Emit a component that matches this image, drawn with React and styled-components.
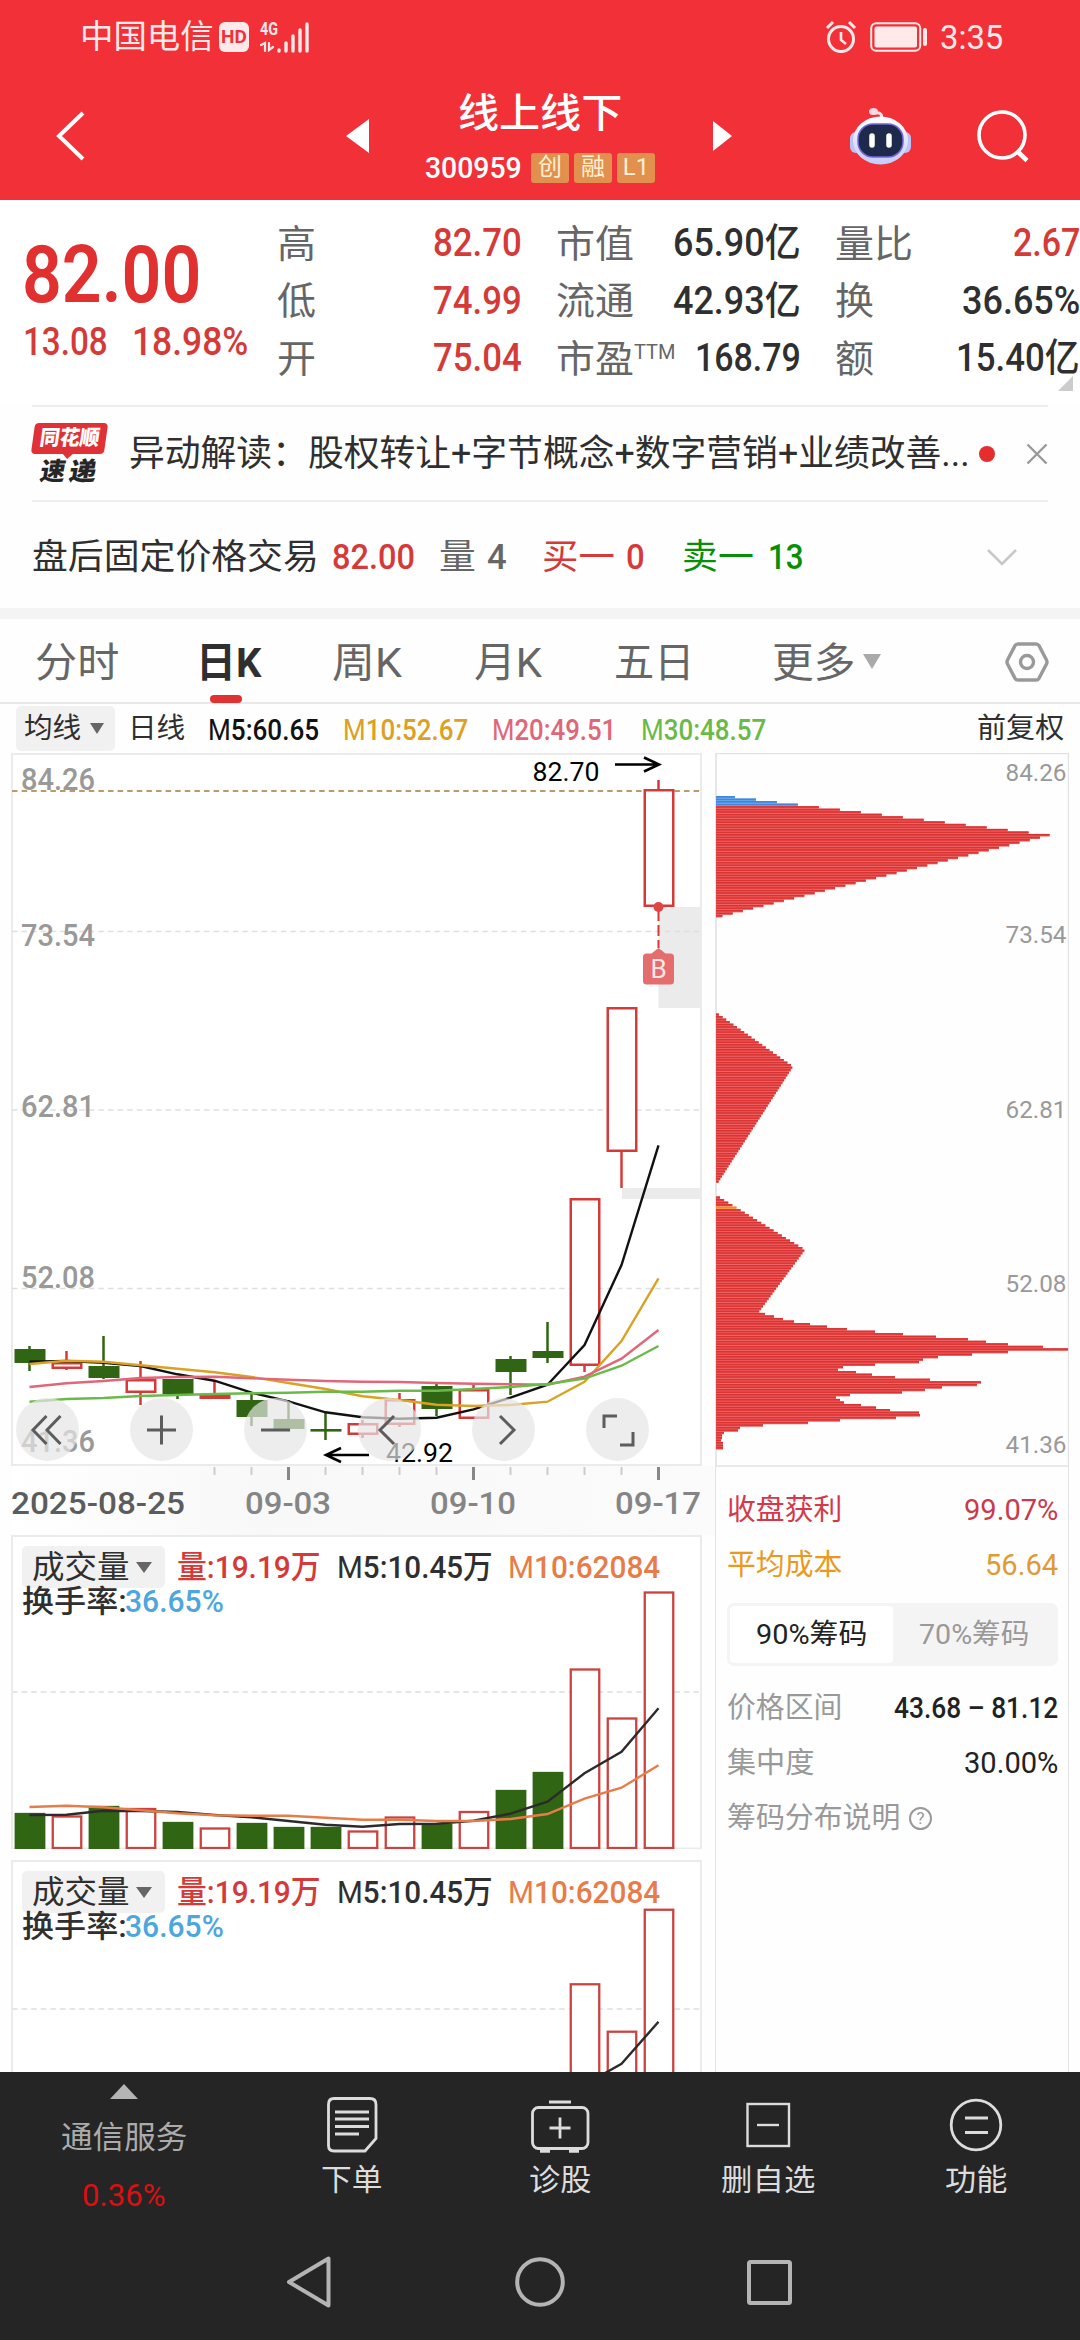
import React, { useLayoutEffect, useRef, useState } from 'react'
import styled, { createGlobalStyle } from 'styled-components'

const COLOR = {
    BRAND: '#f13038',
    UP: '#d43a38',
    DOWN: '#306513',
    TEXT: '#2f2f2f',
    SUBTEXT: '#666666',
    MUTED: '#999999',
    LINE: '#ebebeb',
    BLACK: '#111111',
    GOLD: '#dba125',
    PINK: '#e0667a',
    GREEN: '#6aba48',
    ORANGE: '#e87c48',
    BLUE: '#4da6de',
    NAV: '#252525',
}
const FONT = '"Roboto", "Noto Sans CJK SC", sans-serif'

// Text squeezed to a given width, like the narrow numerals of the app
const Fit = ({ w, children, ...rest }) => {
    const ref = useRef(null)
    const [scale, setScale] = useState(1)
    const bleed = (rest.$size || 30) * 0.08
    useLayoutEffect(() => {
        setScale((w + bleed) / ref.current.offsetWidth)
    }, [w, bleed])
    return (
        <FitBox $w={w} {...rest}>
            <FitInner ref={ref} $shift={-bleed / 2} style={{ transform: `scaleX(${scale})` }}>{children}</FitInner>
        </FitBox>
    )
}

const App = () => (
    <Screen>
        <GlobalStyle />
        <StatusBar />
        <TitleBar />
        <Quote />
        <News />
        <AfterHours />
        <Band />
        <Tabs />
        <AverageRow />
        <Charts>
            <ChartColumn>
                <KLine />
                <Volume top={1535} height={314} grid={1692} base={1849} ratio={1} />
                <Volume top={1860} height={330} grid={2009} base={2158} ratio={0.968} />
            </ChartColumn>
            <ChipColumn>
                <ChipChart />
                <ChipStats />
            </ChipColumn>
        </Charts>
        <BottomBar />
        <SystemNav />
    </Screen>
)

const StatusBar = () => (
    <Status>
        <Fit w={131} $size={33} $ml={81}>中国电信</Fit>
        <HdBadge>HD</HdBadge>
        <svg width="52" height="48" viewBox="259 12 52 48" fill="none" stroke="#ffe9e9" strokeWidth="3.4" strokeLinecap="round">
            <text x="260" y="34" fontSize="18" fontWeight="700" fill="#ffe9e9" stroke="none" fontFamily="Roboto" textLength="18" lengthAdjust="spacingAndGlyphs">4G</text>
            <path d="M261 44l4-2v8M269 42v7l4-3" strokeWidth="2.2" />
            <path d="M279 49v1M286 42v8M293 35v15M300 29v21M307 23v27" />
        </svg>
        <StatusRight>
            <svg width="32" height="34" viewBox="0 0 32 34" fill="none" stroke="#ffe9e9" strokeWidth="3">
                <circle cx="16" cy="19" r="12.5" />
                <path d="M2 8l6-6M30 8l-6-6" />
                <path d="M16 12v8l5 4" strokeWidth="2.6" />
            </svg>
            <svg width="58" height="30" viewBox="0 0 58 30">
                <rect x="1.2" y="1.2" width="49" height="27.6" rx="5" fill="none" stroke="#ffe9e9" strokeWidth="2" />
                <rect x="4.5" y="4.5" width="42.500" height="21" rx="2" fill="#ffe9e9" />
                <path d="M55 8v14" stroke="#ffe9e9" strokeWidth="4" strokeLinecap="round" />
            </svg>
            <Fit w={61} $size={34}>3:35</Fit>
        </StatusRight>
    </Status>
)

const TitleBar = () => (
    <Title>
        <Icon $ml={55} width="31" height="52" viewBox="0 0 31 52">
            <path d="M28 3L4 26l24 23" fill="none" stroke="#fff" strokeWidth="4" />
        </Icon>
        <Icon $ml={260} width="23" height="34" viewBox="0 0 23 34"><path d="M23 0v34L0 17z" fill="#fff" /></Icon>
        <TitleText>
            <Fit w={161} $size={40} $weight={500}>线上线下</Fit>
            <CodeRow>
                <Fit w={94} $size={30} $weight={500}>300959</Fit>
                <Tags>
                    <Tag>创</Tag>
                    <Tag>融</Tag>
                    <Tag>L1</Tag>
                </Tags>
            </CodeRow>
        </TitleText>
        <Icon $ml={58} width="19" height="30" viewBox="0 0 19 30"><path d="M0 0v30l19-15z" fill="#fff" /></Icon>
        <Icon $ml={118} width="62" height="58" viewBox="850 105 62 58">
            <defs>
                <linearGradient id="shell" x1="0" y1="0" x2="0" y2="1">
                    <stop offset="0" stopColor="#ffffff" />
                    <stop offset="1" stopColor="#c3cbfa" />
                </linearGradient>
            </defs>
            <path d="M880 118c4-5 0-8-5-7" fill="none" stroke="#ffe3e6" strokeWidth="3" />
            <ellipse cx="873.500" cy="109.500" rx="4.500" ry="3.500" fill="#fbd9de" />
            <rect x="850" y="130" width="12" height="21" rx="6" fill="#b9c3f5" />
            <rect x="899" y="130" width="12" height="21" rx="6" fill="#b9c3f5" />
            <ellipse cx="880.500" cy="138.500" rx="27.500" ry="24" fill="url(#shell)" />
            <rect x="858" y="122" width="45" height="33" rx="15" fill="#1d2a4b" stroke="#7566d8" strokeWidth="1.500" />
            <path d="M872 134v9M889 134v9" stroke="#fff" strokeWidth="5.500" strokeLinecap="round" />
        </Icon>
        <Icon $ml={64} width="54" height="54" viewBox="0 0 54 54" fill="none" stroke="#fff" strokeWidth="3.600">
            <circle cx="26" cy="26" r="23" />
            <path d="M42 43l9 8.500" strokeWidth="4.500" />
        </Icon>
    </Title>
)

const quotes = [
    [{ label: '高', value: '82.70', w: 86, up: true }, { label: '低', value: '74.99', w: 86, up: true }, { label: '开', value: '75.04', w: 86, up: true }],
    [{ label: '市值', value: '65.90亿', w: 125 }, { label: '流通', value: '42.93亿', w: 125 }, { label: '市盈', sup: 'TTM', value: '168.79', w: 103 }],
    [{ label: '量比', value: '2.67', w: 64, up: true }, { label: '换', value: '36.65%', w: 115 }, { label: '额', value: '15.40亿', w: 121 }],
]

const Quote = () => (
    <QuoteBox>
        <PriceBlock>
            <Fit w={173} $size={79} $weight={600} $color="#e03030">82.00</Fit>
            <ChangeRow>
                <Fit w={82} $size={39} $weight={500} $color={COLOR.UP}>13.08</Fit>
                <Fit w={113} $size={39} $weight={500} $color={COLOR.UP}>18.98%</Fit>
            </ChangeRow>
        </PriceBlock>
        {quotes.map((column, i) => (
            <QuoteColumn key={i}>
                {column.map((q) => (
                    <QuoteCell key={q.label}>
                        <QuoteLabel>
                            <Fit w={q.label.length === 1 ? 36 : 75} $size={38} $color={COLOR.SUBTEXT}>{q.label}</Fit>
                            {q.sup && <Sup>{q.sup}</Sup>}
                        </QuoteLabel>
                        <Fit w={q.w} $size={39} $weight={500} $color={q.up ? COLOR.UP : COLOR.TEXT}>{q.value}</Fit>
                    </QuoteCell>
                ))}
            </QuoteColumn>
        ))}
        <Corner />
    </QuoteBox>
)

const News = () => (
    <NewsRow>
        <NewsLogo>
            <LogoTop><Fit w={58} $size={21} $weight={900} $color="#fff">同花顺</Fit></LogoTop>
            <LogoBottom>
                <Fit w={23} $size={25} $weight={900} $color="#262626">速</Fit>
                <Fit w={25} $size={25} $weight={900} $color="#262626">递</Fit>
            </LogoBottom>
        </NewsLogo>
        <Fit w={838} $size={36} $ml={24} $color={COLOR.TEXT}>异动解读：股权转让+字节概念+数字营销+业绩改善...</Fit>
        <Dot />
        <Icon $ml={31} width="22" height="22" viewBox="0 0 22 22"><path d="M1.500 1.500l19 19M20.500 1.500l-19 19" stroke="#999" strokeWidth="2.400" /></Icon>
    </NewsRow>
)

const AfterHours = () => (
    <AfterRow>
        <Fit w={284} $size={35} $color={COLOR.TEXT}>盘后固定价格交易</Fit>
        <Fit w={80} $size={35} $ml={16} $weight={500} $color={COLOR.UP}>82.00</Fit>
        <Fit w={34} $size={35} $ml={27} $color={COLOR.SUBTEXT}>量</Fit>
        <Fit w={17} $size={35} $ml={14} $weight={500} $color={COLOR.SUBTEXT}>4</Fit>
        <Fit w={70} $size={35} $ml={38} $color={COLOR.UP}>买一</Fit>
        <Fit w={16} $size={35} $ml={14} $weight={500} $color={COLOR.UP}>0</Fit>
        <Fit w={69} $size={35} $ml={40} $color="#078f07">卖一</Fit>
        <Fit w={33} $size={35} $ml={17} $weight={500} $color="#078f07">13</Fit>
        <Icon $ml={184} width="32" height="19" viewBox="0 0 32 19"><path d="M2 2l14 14L30 2" fill="none" stroke="#c8c8c8" strokeWidth="2.600" /></Icon>
    </AfterRow>
)

const tabs = [
    { name: '分时', w: 81, ml: 37 },
    { name: '日K', w: 62, ml: 80, active: true },
    { name: '周K', w: 67, ml: 74 },
    { name: '月K', w: 65, ml: 75 },
    { name: '五日', w: 77, ml: 75 },
    { name: '更多', w: 80, ml: 81 },
]

const Tabs = () => (
    <TabRow>
        {tabs.map((tab) => (
            <Tab key={tab.name} $ml={tab.ml} $active={tab.active}>
                <Fit w={tab.w} $size={41} $weight={tab.active ? 700 : 400} $color={tab.active ? COLOR.TEXT : COLOR.SUBTEXT}>{tab.name}</Fit>
            </Tab>
        ))}
        <Caret $ml={9} $half={9.5} $h={15} $color="#aaa" />
        <Icon $ml={124} width="44" height="40" viewBox="0 0 44 40" fill="none" stroke="#999" strokeWidth="3.400">
            <path d="M13 2h18q2 0 3 1.700l7.500 14.300q1 2 0 4L34 36.300q-1 1.700-3 1.700H13q-2 0-3-1.700L2.500 22q-1-2 0-4L10 3.700Q11 2 13 2z" />
            <circle cx="22" cy="20" r="6.500" />
        </Icon>
    </TabRow>
)

const AverageRow = () => (
    <Averages>
        <Picker $w={99} $h={45}>
            <Fit w={55} $size={28} $ml={9} $color={COLOR.TEXT}>均线</Fit>
            <Caret $ml={10} $half={7} $h={11} $color="#666" />
        </Picker>
        <Fit w={55} $size={28} $ml={14} $color={COLOR.TEXT}>日线</Fit>
        <Fit w={109} $size={30} $ml={25} $weight={500} $color={COLOR.BLACK}><Thin>M</Thin>5:60.65</Fit>
        <Fit w={123} $size={30} $ml={26} $weight={500} $color={COLOR.GOLD}><Thin>M</Thin>10:52.67</Fit>
        <Fit w={122} $size={30} $ml={26} $weight={500} $color={COLOR.PINK}><Thin>M</Thin>20:49.51</Fit>
        <Fit w={123} $size={30} $ml={27} $weight={500} $color={COLOR.GREEN}><Thin>M</Thin>30:48.57</Fit>
        <Fit w={85} $size={28} $ml={213} $color={COLOR.TEXT}>前复权</Fit>
    </Averages>
)

// high, bodyTop, bodyBottom, low, rising
const candles = [
    [1346, 1349, 1363, 1371, 0], [1351, 1362, 1369, 1370, 1], [1336, 1366, 1378, 1379, 0],
    [1361, 1379, 1393, 1405, 1], [1379, 1379, 1394, 1399, 0], [1380, 1394, 1399, 1399, 1],
    [1394, 1400, 1417, 1426, 0], [1400, 1419, 1429, 1429, 0], [1413, 1429, 1431, 1440, 0],
    [1420, 1423, 1435, 1438, 1], [1393, 1399, 1425, 1427, 1], [1384, 1386, 1409, 1416, 0],
    [1384, 1389, 1419, 1419, 1], [1356, 1359, 1372, 1395, 0], [1322, 1351, 1358, 1363, 0],
    [1198, 1198, 1366, 1372, 1], [1007, 1007, 1152, 1188, 1], [780, 789, 907, 907, 1],
]
const averages = [
    [COLOR.BLACK, [1361.7, 1361, 1362.7, 1366, 1374.3, 1380.7, 1392.7, 1401.3, 1412.3, 1417.3, 1418.7, 1417.7, 1409.3, 1397.7, 1384.7, 1345, 1265, 1145.3]],
    [COLOR.GOLD, [1364, 1360.7, 1361.7, 1365.3, 1368.7, 1372.3, 1377, 1383, 1389, 1396.3, 1400, 1404.7, 1406, 1405, 1401.7, 1381.7, 1341, 1278.3]],
    [COLOR.PINK, [1387, 1383.3, 1381, 1378, 1377, 1376.7, 1378.3, 1379.7, 1381, 1381.7, 1382, 1383, 1383.7, 1384.3, 1384.7, 1376.7, 1358.7, 1330]],
    [COLOR.GREEN, [1401.7, 1399, 1398, 1396, 1395, 1394, 1393.3, 1392.7, 1391.7, 1391.7, 1390.7, 1390.7, 1389, 1387, 1384, 1378.7, 1365.7, 1346]],
]
const cx = (i) => 29.5 + i * 37
const points = (ys) => ys.map((y, i) => `${cx(i)},${y}`).join(' ')

const Label = ({ w, children, ...rest }) => (
    <text textLength={w} lengthAdjust="spacingAndGlyphs" fontFamily="Roboto" {...rest}>{children}</text>
)

const KLine = () => (
    <KBox>
        <svg width="716" height="782" viewBox="0 753 716 782">
            <defs>
                <linearGradient id="fade">
                    <stop offset="0" stopColor="#fff" />
                    <stop offset="0.350" stopColor="#f8f8f8" />
                    <stop offset="1" stopColor="#fbfbfb" />
                </linearGradient>
            </defs>
            <rect x="12" y="1466" width="704" height="69" fill="url(#fade)" />
            <rect x="12" y="754" width="689" height="711" fill="#fff" stroke={COLOR.LINE} strokeWidth="2" />
            <rect x="658.500" y="907" width="43.500" height="101" fill="#ebebeb" />
            <rect x="622" y="1188" width="80" height="11" fill="#ebebeb" />
            {[931.5, 1110, 1288.5].map((y) => (
                <path key={y} d={`M12 ${y}H701`} stroke="#dfdfdf" strokeWidth="1.300" strokeDasharray="5.500 4.100" />
            ))}
            {[['84.26', 790], ['73.54', 946], ['62.81', 1117], ['52.08', 1288], ['41.36', 1452]].map(([t, y]) => (
                <Label key={t} w={74} x="21" y={y} fontSize="32" fontWeight="500" fill={COLOR.MUTED}>{t}</Label>
            ))}
            <path d="M12 791H701" stroke="#b99a6b" strokeWidth="2" strokeDasharray="5.500 4.100" />
            {candles.map(([high, top, bottom, low, rising], i) => (
                <g key={i} stroke={rising ? COLOR.UP : COLOR.DOWN} strokeWidth="2.500">
                    <path d={`M${cx(i)} ${high}V${top}M${cx(i)} ${bottom}V${low}`} />
                    <rect x={cx(i) - 13.75} y={top + 1.25} width="28.500" height={Math.max(bottom - top - 2.5, 0.1)} fill={rising ? '#fff' : COLOR.DOWN} />
                </g>
            ))}
            {averages.map(([color, ys]) => (
                <polyline key={color} points={points(ys)} fill="none" stroke={color} strokeWidth="2.400" />
            ))}
            <path d="M658.500 910v38" stroke={COLOR.UP} strokeWidth="2" strokeDasharray="11 4" />
            <circle cx="658.500" cy="907" r="5" fill="#e04545" />
            <path d="M658.500 948l7 5.500h5q3.500 0 3.500 3.500v24q0 3.500-3.500 3.500h-24q-3.500 0-3.500-3.500v-24q0-3.500 3.500-3.500h5z" fill="#e56d6d" />
            <text x="658.500" y="978" fontSize="26" fontFamily="Roboto" fill="#ffe6e6" textAnchor="middle">B</text>
            <Label w={67} x="532.500" y="780.500" fontSize="26" fill="#000">82.70</Label>
            <path d="M615 764.500h43M644 757.500l15 7-15 7" fill="none" stroke="#000" strokeWidth="2.600" />
            <Label w={67} x="386" y="1462" fontSize="26" fill="#000">42.92</Label>
            <path d="M369 1455h-43M341 1448l-15 7 15 7" fill="none" stroke="#000" strokeWidth="2.600" />
            {Array.from({ length: 13 }, (_, i) => i + 5).map((i) => (
                (i - 7) % 5 === 0
                    ? <path key={i} d={`M${cx(i)} 1467v13`} stroke="#888" strokeWidth="3" />
                    : <path key={i} d={`M${cx(i)} 1467v8`} stroke="#ccc" strokeWidth="2" />
            ))}
            <Label w={174} x="11" y="1514" fontSize="31" fontWeight="500" fill="#5c5c5c">2025-08-25</Label>
            <Label w={86} x="245" y="1514" fontSize="31" fontWeight="500" fill="#858585">09-03</Label>
            <Label w={86} x="430" y="1514" fontSize="31" fontWeight="500" fill="#858585">09-10</Label>
            <Label w={86} x="615" y="1514" fontSize="31" fontWeight="500" fill="#858585">09-17</Label>
        </svg>
        <Controls>
            {controls.map((d) => (
                <Control key={d}>
                    <svg width="63" height="63" viewBox="0 0 63 63" fill="none" stroke="#5c5c5c" strokeWidth="3"><path d={d} /></svg>
                </Control>
            ))}
        </Controls>
    </KBox>
)
const controls = [
    'M30.500 18L17 32l13.500 14M44.500 18L31 32l13.500 14',
    'M17 32h29M31.500 17.500v29',
    'M17 32h29',
    'M36 18L22 32l14 14',
    'M28 18l14 14-14 14',
    'M18 30V18h13M47 34v13H34',
]

// top of the bar, rising
const volumes = [
    [1813, 0], [1815.5, 1], [1806, 0], [1808, 1], [1822, 0], [1827.5, 1], [1823, 0], [1827, 0], [1827, 0],
    [1830.5, 1], [1816.5, 1], [1824, 0], [1811, 1], [1790, 0], [1772, 0], [1668.5, 1], [1717.5, 1], [1591.5, 1],
]
const volume5 = [1815, 1814.7, 1810.7, 1811, 1812, 1815, 1817.3, 1821, 1824.7, 1826.7, 1824, 1823.7, 1820.7, 1813.7, 1801.7, 1773.3, 1751.7, 1708.3]
const volume10 = [1807, 1805.7, 1807.3, 1810.3, 1813.3, 1815.3, 1815.7, 1815.7, 1817.7, 1819.7, 1819.7, 1821, 1821, 1819, 1814, 1798.7, 1787.7, 1765.3]

const Volume = ({ top, height, grid, base, ratio }) => {
    const y = (v) => base - (1849 - v) * ratio
    return (
        <VolumeBox $h={height}>
            <VolumeChart width="716" height={height} viewBox={`0 ${top} 716 ${height}`}>
                <rect x="12" y={top + 1} width="689" height={base - top - 1.5} fill="#fff" stroke={COLOR.LINE} strokeWidth="2" />
                <path d={`M12 ${grid}H701`} stroke="#e6e6e6" strokeWidth="1.800" strokeDasharray="5.500 4.100" />
                {volumes.map(([v, rising], i) => (
                    <rect
                        key={i}
                        x={cx(i) - 13.75}
                        y={y(v) + 1}
                        width="28.500"
                        height={base - y(v) - 2}
                        fill={rising ? '#fff' : COLOR.DOWN}
                        stroke={rising ? '#cb4340' : COLOR.DOWN}
                        strokeWidth="2.300"
                    />
                ))}
                <polyline points={points(volume5.map(y))} fill="none" stroke="#2b2b2b" strokeWidth="2.400" />
                <polyline points={points(volume10.map(y))} fill="none" stroke={COLOR.ORANGE} strokeWidth="2.400" />
            </VolumeChart>
            <VolumeHead>
                <Picker $w={143} $h={42}>
                    <Fit w={95} $size={32} $ml={11} $color={COLOR.TEXT}>成交量</Fit>
                    <Caret $ml={8} $half={8} $h={11} $color="#666" />
                </Picker>
                <Fit w={141} $size={32} $ml={13} $weight={500} $color={COLOR.UP}>量:19.19万</Fit>
                <Fit w={153} $size={32} $ml={19} $weight={500} $color={COLOR.TEXT}><Thin>M</Thin>5:10.45万</Fit>
                <Fit w={150} $size={32} $ml={18} $weight={500} $color={COLOR.ORANGE}><Thin>M</Thin>10:62084</Fit>
            </VolumeHead>
            <Turnover>
                <Fit w={102} $size={31} $weight={500} $color={COLOR.TEXT}>换手率:</Fit>
                <Fit w={96} $size={32} $ml={1} $weight={500} $color={COLOR.BLUE}>36.65%</Fit>
            </Turnover>
        </VolumeBox>
    )
}

// [y, width] corners of the chip distribution
const chipAreas = [
    [[796, 19], [834, 334], [916, 2]],
    [[1013.5, 3], [1065.5, 77], [1183, 1]],
    [[1196.5, 4], [1248.7, 89], [1312, 42]],
]
const chipTail = [
    49, 58, 67, 78, 94, 111, 131, 159, 187, 220, 252, 270, 292, 327, 352, 292, 256, 222, 207, 203, 159, 127, 122,
    140, 156, 179, 214, 265, 261, 226, 209, 186, 134, 120, 124, 128, 145, 160, 174, 203, 204, 180, 124, 92, 47,
    24, 22, 8, 6, 6, 5, 7, 7, 7,
]
const STEP = 2.53
const chips = []
chipAreas.forEach(([a, b, c]) => {
    for (let y = a[0]; y < c[0]; y += STEP) {
        const [p, q] = y < b[0] ? [a, b] : [b, c]
        chips.push([y, p[1] + ((q[1] - p[1]) * (y - p[0])) / (q[0] - p[0])])
    }
})
chipTail.forEach((w, i) => chips.push([1312.9 + i * STEP, w]))

const chipColor = (y) => {
    if (y < 804) return ['#3f86dc', '#69a6ea']
    if (y > 1205.5 && y < 1208.5) return ['#f08a2c', '#f5a04c']
    return ['#d93434', '#f05555']
}

const ChipChart = () => (
    <svg width="354" height="714" viewBox="715 753 354 714">
        <path d="M716 753.500h352.500v713" fill="none" stroke="#e2e2e2" strokeWidth="1.400" />
        <path d="M716 753v714M716 1466H1069" stroke="#e2e2e2" strokeWidth="1.600" />
        {chips.map(([y, w]) => {
            const [main, gap] = chipColor(y)
            return (
                <g key={y}>
                    <rect x="716" y={y} width={w} height={STEP} fill={gap} />
                    <rect x="716" y={y} width={w} height="1.600" fill={main} />
                </g>
            )
        })}
        {[['84.26', 781], ['73.54', 943], ['62.81', 1117.5], ['52.08', 1292], ['41.36', 1453]].map(([t, y]) => (
            <Label key={t} w={61} x="1005.500" y={y} fontSize="24" fill={COLOR.MUTED}>{t}</Label>
        ))}
    </svg>
)

const ChipStats = () => (
    <Stats>
        <StatRow>
            <Fit w={113} $size={29} $color="#d5384a">收盘获利</Fit>
            <Fit w={92} $size={29} $color="#c93a4a">99.07%</Fit>
        </StatRow>
        <StatRow>
            <Fit w={113} $size={29} $color="#ea9920">平均成本</Fit>
            <Fit w={71} $size={29} $color="#df9a35">56.64</Fit>
        </StatRow>
        <Switch>
            <Option $active><Fit w={109} $size={28} $color="#222">90%筹码</Fit></Option>
            <Option><Fit w={108} $size={28} $color={COLOR.MUTED}>70%筹码</Fit></Option>
        </Switch>
        <StatRow>
            <Fit w={113} $size={29} $color={COLOR.MUTED}>价格区间</Fit>
            <Fit w={162} $size={29} $weight={500} $color="#222">43.68 – 81.12</Fit>
        </StatRow>
        <StatRow>
            <Fit w={85} $size={29} $color={COLOR.MUTED}>集中度</Fit>
            <Fit w={92} $size={29} $color="#222">30.00%</Fit>
        </StatRow>
        <StatRow>
            <Fit w={171} $size={29} $color={COLOR.MUTED}>筹码分布说明</Fit>
            <Help>?</Help>
        </StatRow>
    </Stats>
)

const BottomBar = () => (
    <Bottom>
        <Sector>
            <Icon width="28" height="15" viewBox="0 0 28 15"><path d="M0 15L14 0l14 15z" fill="#b5b5b5" /></Icon>
            <SectorName><Fit w={124} $size={31} $color="#ababab">通信服务</Fit></SectorName>
            <Fit w={81} $size={31} $color="#dc1010">0.36%</Fit>
        </Sector>
        <Action>
            <svg width="60" height="60" viewBox="322 2094 60 60" fill="none" stroke="#dcdcdc" strokeWidth="2.800">
                <path d="M334 2098.500h36q6 0 6 6v34l-11 12.500h-31q-5.500 0-5.500-5.500v-41q0-6 5.500-6z" />
                <path d="M335 2112h34M335 2119h34M335 2126.500h34M335 2134h24" />
            </svg>
            <Fit w={59} $size={30} $color="#dcdcdc">下单</Fit>
        </Action>
        <Action>
            <svg width="60" height="60" viewBox="530 2094 60 60" fill="none" stroke="#dcdcdc" strokeWidth="2.800">
                <rect x="532.500" y="2107.500" width="55.500" height="41" rx="6" />
                <path d="M549 2102h22M549.500 2128h21M560 2117.500v21" />
                <path d="M540 2151h10M569 2151h10" strokeWidth="3.500" />
            </svg>
            <Fit w={60} $size={30} $color="#dcdcdc">诊股</Fit>
        </Action>
        <Action>
            <svg width="60" height="60" viewBox="738 2094 60 60" fill="none" stroke="#dcdcdc" strokeWidth="2.400">
                <rect x="747.500" y="2104" width="41.500" height="42" />
                <path d="M757 2125h22" />
            </svg>
            <Fit w={92} $size={30} $color="#dcdcdc">删自选</Fit>
        </Action>
        <Action>
            <svg width="60" height="60" viewBox="946 2094 60 60" fill="none" stroke="#dcdcdc" strokeWidth="2.800">
                <circle cx="976" cy="2125" r="24.800" />
                <path d="M965 2118h23M965 2132.500h23" />
            </svg>
            <Fit w={60} $size={30} $color="#dcdcdc">功能</Fit>
        </Action>
    </Bottom>
)

const SystemNav = () => (
    <Nav>
        <svg width="52" height="54" viewBox="0 0 52 54"><path d="M43.500 3.500v47L4 27z" fill="none" stroke="#b4b4b4" strokeWidth="4" strokeLinejoin="round" /></svg>
        <svg width="52" height="54" viewBox="0 0 52 54"><circle cx="26" cy="27" r="22.800" fill="none" stroke="#b4b4b4" strokeWidth="4" /></svg>
        <svg width="52" height="54" viewBox="0 0 52 54"><rect x="6" y="7" width="41" height="41" rx="1.500" fill="none" stroke="#b4b4b4" strokeWidth="4" /></svg>
    </Nav>
)

const GlobalStyle = createGlobalStyle`
    * { box-sizing: border-box; }
    body { margin: 0; background: #fff; }
    svg { display: block; flex: none; }
`;

const Screen = styled.div`
    width: 1080px;
    height: 2340px;
    overflow: hidden;
    display: flex;
    flex-direction: column;
    background: #fefefe;
    font-family: ${FONT};
`;

const FitBox = styled.span`
    display: block;
    flex: none;
    width: ${(props) => props.$w}px;
    margin-left: ${(props) => props.$ml || 0}px;
    font-size: ${(props) => props.$size}px;
    font-weight: ${(props) => props.$weight || 400};
    line-height: 1;
    color: ${(props) => props.$color || 'inherit'};
`;

const FitInner = styled.span`
    display: block;
    width: max-content;
    white-space: nowrap;
    margin-left: ${(props) => props.$shift}px;
    transform-origin: left center;
`;

const Thin = styled.span`
    font-weight: 400;
`;

const Icon = styled.svg`
    margin-left: ${(props) => props.$ml || 0}px;
`;

const Caret = styled.span`
    flex: none;
    margin-left: ${(props) => props.$ml}px;
    border-left: ${(props) => props.$half}px solid transparent;
    border-right: ${(props) => props.$half}px solid transparent;
    border-top: ${(props) => props.$h}px solid ${(props) => props.$color};
`;

const Status = styled.div`
    height: 72px;
    flex: none;
    padding-top: 1px;
    display: flex;
    align-items: center;
    color: #ffe9e9;
    background: ${COLOR.BRAND};
`;

const HdBadge = styled.span`
    width: 30px;
    height: 30px;
    margin: 0 10px 0 7px;
    border-radius: 6px;
    background: #ffe9e9;
    color: ${COLOR.BRAND};
    font-size: 19px;
    font-weight: 700;
    line-height: 30px;
    text-align: center;
`;

const StatusRight = styled.div`
    display: flex;
    align-items: center;
    gap: 13px;
    margin-left: auto;
    padding-right: 78px;
`;

const Title = styled.div`
    height: 128px;
    flex: none;
    display: flex;
    align-items: center;
    background: ${COLOR.BRAND};
`;

const TitleText = styled.div`
    width: 229px;
    height: 128px;
    margin-left: 57px;
    padding-top: 22px;
    display: flex;
    flex-direction: column;
    align-items: center;
    color: #fff;
`;

const CodeRow = styled.div`
    width: 100%;
    margin-top: 19px;
    display: flex;
    justify-content: space-between;
    align-items: center;
`;

const Tags = styled.div`
    display: flex;
    gap: 5px;
`;

const Tag = styled.span`
    width: 38px;
    height: 30px;
    border-radius: 3px;
    background: #e2904d;
    color: #fff0d4;
    font-size: 24px;
    line-height: 29px;
    text-align: center;
`;

const QuoteBox = styled.div`
    position: relative;
    height: 205px;
    flex: none;
    display: flex;
    background: #fff;
`;

const PriceBlock = styled.div`
    width: 279px;
    padding: 36px 0 0 25px;
`;

const ChangeRow = styled.div`
    display: flex;
    gap: 27px;
    margin-top: 8px;
`;

const QuoteColumn = styled.div`
    width: 242px;
    margin-right: 37px;
    padding-top: 15px;
    flex: none;
    &:last-of-type {
        margin-right: 0;
    }
`;

const QuoteCell = styled.div`
    height: 57.5px;
    display: flex;
    justify-content: space-between;
    align-items: center;
`;

const QuoteLabel = styled.div`
    display: flex;
    align-items: flex-start;
`;

const Sup = styled.span`
    margin-left: 1px;
    color: ${COLOR.SUBTEXT};
    font-size: 20px;
    line-height: 20px;
    padding-top: 2px;
`;

const Corner = styled.i`
    position: absolute;
    right: 7px;
    bottom: 14px;
    width: 15px;
    height: 15px;
    background: #cccccc;
    clip-path: polygon(100% 0, 100% 100%, 0 100%);
`;

const NewsRow = styled.div`
    height: 95px;
    flex: none;
    margin: 0 32px;
    display: flex;
    align-items: center;
    border-top: 2px solid #eeeeee;
`;

const NewsLogo = styled.div`
    width: 74px;
    height: 62px;
    margin-left: 1px;
`;

const LogoTop = styled.div`
    position: relative;
    height: 31px;
    display: flex;
    align-items: center;
    justify-content: center;
    border-radius: 4px;
    background: #e03236;
    transform: skewX(-8deg);
    &::after {
        content: '';
        position: absolute;
        left: 31px;
        top: 30px;
        border: 6px solid transparent;
        border-top-color: #e03236;
        border-bottom: none;
    }
`;

const LogoBottom = styled.div`
    padding: 5px 0 0 9px;
    display: flex;
    gap: 6px;
    transform: skewX(-10deg);
`;

const Dot = styled.i`
    width: 16px;
    height: 16px;
    margin-left: 11px;
    border-radius: 50%;
    background: #e52d2d;
`;

const AfterRow = styled.div`
    height: 108px;
    flex: none;
    margin: 0 32px;
    padding: 4px 0 0 1px;
    display: flex;
    align-items: center;
    border-top: 2px solid #eeeeee;
`;

const Band = styled.div`
    height: 11px;
    flex: none;
    background: #f4f4f4;
`;

const TabRow = styled.div`
    height: 85px;
    flex: none;
    padding-top: 2px;
    display: flex;
    align-items: center;
    border-bottom: 2px solid #e8e8e8;
`;

const Tab = styled.div`
    position: relative;
    height: 81px;
    padding-top: 3px;
    margin-left: ${(props) => props.$ml}px;
    display: flex;
    align-items: center;
    &::after {
        content: '';
        display: ${(props) => (props.$active ? 'block' : 'none')};
        position: absolute;
        left: 12px;
        bottom: -1px;
        width: 32px;
        height: 8px;
        border-radius: 4px;
        background: #e03232;
    }
`;

const Averages = styled.div`
    height: 49px;
    flex: none;
    padding: 2px 0 0 16px;
    display: flex;
    align-items: flex-start;
    > span {
        margin-top: 9px;
    }
`;

const Picker = styled.div`
    width: ${(props) => props.$w}px;
    height: ${(props) => props.$h}px;
    flex: none;
    display: flex;
    align-items: center;
    border-radius: 5px;
    background: #f1f1f1;
`;

const Charts = styled.div`
    height: 1319px;
    flex: none;
    display: flex;
    overflow: hidden;
`;

const ChartColumn = styled.div`
    width: 715px;
    flex: none;
    display: flex;
    flex-direction: column;
    gap: 11px;
    overflow: hidden;
`;

const KBox = styled.div`
    position: relative;
    height: 782px;
    flex: none;
    margin-bottom: -11px;
`;

const Controls = styled.div`
    position: absolute;
    left: 16px;
    top: 645px;
    display: flex;
    gap: 51px;
`;

const Control = styled.div`
    width: 63px;
    height: 63px;
    border-radius: 50%;
    background: rgba(230, 230, 230, 0.7);
`;

const VolumeBox = styled.div`
    position: relative;
    height: ${(props) => props.$h}px;
    flex: none;
`;

const VolumeChart = styled.svg`
    position: absolute;
    left: 0;
    top: 0;
`;

const VolumeHead = styled.div`
    position: relative;
    padding: 11px 0 0 22px;
    display: flex;
    align-items: center;
`;

const Turnover = styled.div`
    position: relative;
    margin-top: -3px;
    padding-left: 23px;
    display: flex;
    align-items: center;
`;

const ChipColumn = styled.div`
    width: 354px;
    height: 1319px;
    flex: none;
`;

const Stats = styled.div`
    height: 606px;
    padding: 16px 11px 0 12px;
    border: solid #e2e2e2;
    border-width: 0 1px;
`;

const StatRow = styled.div`
    height: 55px;
    display: flex;
    align-items: center;
    justify-content: space-between;
`;

const Switch = styled.div`
    height: 63px;
    margin: 10px -1px 15px;
    padding: 3px;
    display: flex;
    border-radius: 7px;
    background: #f4f4f4;
`;

const Option = styled.div`
    width: 50%;
    padding-top: 1px;
    display: flex;
    align-items: center;
    justify-content: center;
    border-radius: 4px;
    background: ${(props) => (props.$active ? '#fff' : 'transparent')};
`;

const Help = styled.span`
    width: 23px;
    height: 23px;
    margin-right: auto;
    margin-left: 10px;
    border: 2px solid ${COLOR.MUTED};
    border-radius: 50%;
    color: ${COLOR.MUTED};
    font-size: 17px;
    line-height: 19px;
    text-align: center;
`;

const Bottom = styled.div`
    height: 154px;
    flex: none;
    display: flex;
    background: ${COLOR.NAV};
`;

const Sector = styled.div`
    width: 248px;
    padding-top: 12px;
    display: flex;
    flex-direction: column;
    align-items: center;
`;

const SectorName = styled.div`
    margin: 23px 0 27px;
`;

const Action = styled.div`
    width: 208px;
    padding-top: 22px;
    display: flex;
    flex-direction: column;
    align-items: center;
    gap: 11px;
`;

const Nav = styled.div`
    height: 114px;
    flex: none;
    padding: 29px 285px 0;
    display: flex;
    justify-content: space-between;
    background: ${COLOR.NAV};
`;

export default App;
